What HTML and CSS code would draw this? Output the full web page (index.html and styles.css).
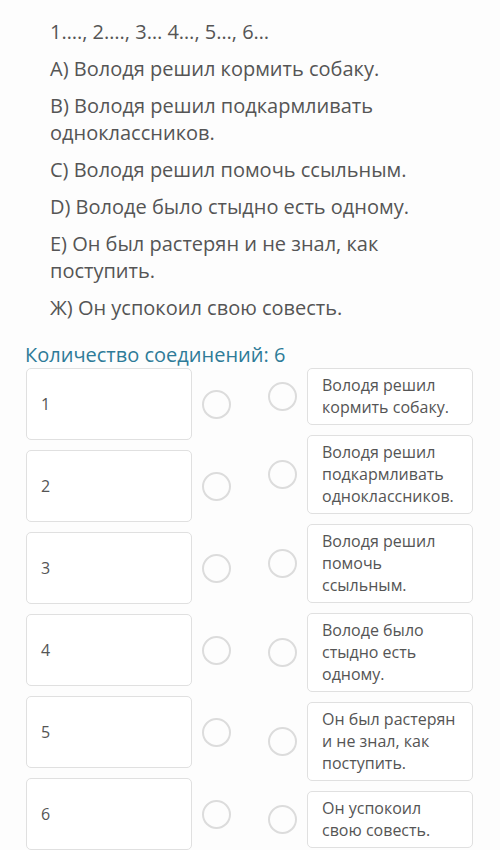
FILE: index.html
```html
<!DOCTYPE html>
<html lang="ru">
<head>
    <meta charset="UTF-8">
    <meta name="viewport" content="width=device-width, initial-scale=1.0">
    <title>Соединения</title>
    <link rel="stylesheet" href="styles.css">
</head>
<body>
    <div class="question">
        <p>1…., 2…., 3… 4…, 5…, 6…</p>
        <p>А) Володя решил кормить собаку.</p>
        <p>В) Володя решил подкармливать одноклассников.</p>
        <p>С) Володя решил помочь ссыльным.</p>
        <p>D) Володе было стыдно есть одному.</p>
        <p>Е) Он был растерян и не знал, как поступить.</p>
        <p>Ж) Он успокоил свою совесть.</p>
    </div>

    <h2 class="count">Количество соединений: 6</h2>

    <div class="matching">
        <div class="column leftColumn">
            <div class="item"><div class="box numBox">1</div><span class="dot"></span></div>
            <div class="item"><div class="box numBox">2</div><span class="dot"></span></div>
            <div class="item"><div class="box numBox">3</div><span class="dot"></span></div>
            <div class="item"><div class="box numBox">4</div><span class="dot"></span></div>
            <div class="item"><div class="box numBox">5</div><span class="dot"></span></div>
            <div class="item"><div class="box numBox">6</div><span class="dot"></span></div>
        </div>
        <div class="column rightColumn">
            <div class="item"><span class="dot"></span><div class="box answerBox">Володя решил кормить собаку.</div></div>
            <div class="item"><span class="dot"></span><div class="box answerBox">Володя решил подкармливать одноклассников.</div></div>
            <div class="item"><span class="dot"></span><div class="box answerBox">Володя решил помочь ссыльным.</div></div>
            <div class="item"><span class="dot"></span><div class="box answerBox">Володе было стыдно есть одному.</div></div>
            <div class="item"><span class="dot"></span><div class="box answerBox">Он был растерян и не знал, как поступить.</div></div>
            <div class="item"><span class="dot"></span><div class="box answerBox">Он успокоил свою совесть.</div></div>
        </div>
    </div>
</body>
</html>
```

FILE: styles.css
```css
body {
    font-family: "Open Sans", Arial, sans-serif;
    margin: 0;
    background-color: #fdfdfd;
    color: #555;
}

.question {
    padding: 18px 20px 0 50px;
}

.question p {
    font-size: 20px;
    line-height: 27px;
    margin: 0 0 10px;
}

.count {
    font-size: 20px;
    font-weight: normal;
    line-height: 27px;
    color: #2e7b98;
    margin: 20px 0 0 25px;
}

.matching {
    display: flex;
    gap: 37px;
    padding-left: 26px;
}

.column {
    display: flex;
    flex-direction: column;
    gap: 10px;
}

.item {
    display: flex;
    align-items: center;
    gap: 10px;
}

.box {
    width: 166px;
    box-sizing: border-box;
    border: 1px solid #e0e0e0;
    border-radius: 5px;
    background-color: #fff;
    font-size: 16px;
    line-height: 22px;
}

.numBox {
    height: 72px;
    display: flex;
    align-items: center;
    padding-left: 14px;
}

.answerBox {
    padding: 5px 10px 6px 14px;
}

.dot {
    width: 29px;
    height: 29px;
    box-sizing: border-box;
    border: 2.5px solid #dcdcdc;
    border-radius: 50%;
    flex-shrink: 0;
}
```
